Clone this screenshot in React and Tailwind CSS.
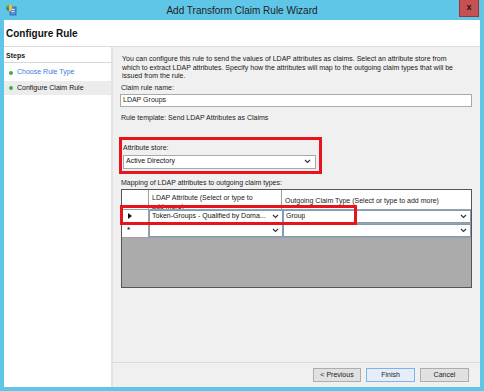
import React from 'react';

const font = { fontFamily: '"Liberation Sans", Arial, sans-serif' };

const Chevron = () => (
  <svg width="7" height="5" viewBox="0 0 7 5" className="shrink-0">
    <path d="M1 1 L3.5 3.5 L6 1" fill="none" stroke="#333" strokeWidth="1.1" />
  </svg>
);

const TitleIcon = () => (
  <svg width="12" height="12" viewBox="0 0 12 12">
    <rect x="5" y="3" width="6" height="8" fill="#5b8fd6" stroke="#2f5ea8" strokeWidth="0.8" />
    <rect x="6.5" y="5" width="3" height="1" fill="#cfe3ff" />
    <rect x="6.5" y="7" width="3" height="1" fill="#cfe3ff" />
    <circle cx="4" cy="4" r="3.2" fill="#f2c12e" />
    <path d="M1 4 A3 3 0 0 1 4 1 L4 4 Z" fill="#3fae49" />
    <path d="M4 7 A3 3 0 0 1 1 4 L4 4 Z" fill="#2b7fd1" />
  </svg>
);

const Combo = ({ text, className }) => (
  <div className={`flex items-center justify-between bg-white border border-[#7f9db9] pl-[2px] pr-[3px] ${className}`}>
    <span className="truncate text-[7px] text-[#111]">{text}</span>
    <Chevron />
  </div>
);

export default function App() {
  return (
    <div style={font} className="w-[484px] h-[391px] bg-[#5fc6e8] flex flex-col text-[#1a1a1a]">
      {/* title bar */}
      <div className="h-[20px] flex items-center relative pl-[5px]">
        <TitleIcon />
        <div className="absolute left-0 right-0 top-0 h-[20px] flex items-center justify-center text-[10px] text-[#222] pointer-events-none">
          Add Transform Claim Rule Wizard
        </div>
        <div className="absolute right-[5px] top-0 w-[20px] h-[17px] bg-[#c75050] border border-[#8f3a37] border-t-0 flex items-center justify-center text-[9px] font-bold text-[#1a1a1a]">
          x
        </div>
      </div>

      {/* body */}
      <div className="flex-1 mx-[4px] mb-[4px] bg-white flex flex-col">
        <div className="h-[27px] flex items-center pl-[2px] border-b border-[#dcdcdc]">
          <span className="text-[10px] font-bold text-[#111]">Configure Rule</span>
        </div>

        <div className="flex-1 flex">
          {/* steps */}
          <div className="w-[109px] border-r-2 border-[#e3e3e3] flex flex-col">
            <div className="h-[13px] flex items-center pl-[2px] border-b border-[#d8d8d8] mt-[3px]">
              <span className="text-[7px] font-bold">Steps</span>
            </div>
            <div className="h-[17px] flex items-center pl-[5px] gap-[4px] mt-[1px]">
              <span className="w-[4px] h-[4px] rounded-full bg-[#3cb43c]" />
              <span className="text-[7px] text-[#3f78e0]">Choose Rule Type</span>
            </div>
            <div className="h-[14px] flex items-center pl-[5px] gap-[4px] bg-[#ececec]">
              <span className="w-[4px] h-[4px] rounded-full bg-[#3cb43c]" />
              <span className="text-[7px] text-[#111]">Configure Claim Rule</span>
            </div>
          </div>

          {/* main */}
          <div className="flex-1 bg-[#f0f0f0] flex flex-col">
            <div className="flex-1 pl-[7px] pr-[8px] pt-[8px] text-[7px] text-[#1a1a1a]">
              <p className="leading-[8.5px] pl-[2px] pr-[10px]">
                You can configure this rule to send the values of LDAP attributes as claims. Select an attribute store from which to extract LDAP attributes. Specify how the attributes will map to the outgoing claim types that will be issued from the rule.
              </p>
              <div className="leading-[9px] mt-[2px] pl-[1px]">Claim rule name:</div>
              <div className="mt-[2px] h-[13px] bg-white border border-[#a9a9a9] flex items-center pl-[2px]">
                LDAP Groups
              </div>
              <div className="leading-[9px] mt-[6px] pl-[1px]">Rule template: Send LDAP Attributes as Claims</div>

              <div className="mt-[15px] -ml-[1px] w-[203px] border-[3px] border-[#e8141c] pl-[1px] pr-[3px] pt-[3px] pb-[2px]">
                <div className="leading-[9px]">Attribute store:</div>
                <Combo text="Active Directory" className="mt-[3px] h-[14px] border-[#a9a9a9] pr-[4px]" />
              </div>

              <div className="leading-[9px] mt-[4px] pl-[1px]">Mapping of LDAP attributes to outgoing claim types:</div>

              <div className="relative mt-[2px] ml-[1px] h-[99px] bg-[#ababab] border border-[#555]">
                <div className="flex h-[20px] bg-white border-b border-[#a0a0a0]">
                  <div className="w-[27px] border-r border-[#a0a0a0]" />
                  <div className="w-[133px] border-r border-[#a0a0a0] pl-[3px] pr-[22px] pt-[3px] leading-[9px] overflow-hidden">
                    LDAP Attribute (Select or type to add more)
                  </div>
                  <div className="flex-1 pl-[3px] flex items-center pt-[4px]">
                    Outgoing Claim Type (Select or type to add more)
                  </div>
                </div>
                <div className="flex h-[14px] border-b border-[#a0a0a0]">
                  <div className="w-[27px] bg-white border-r border-[#a0a0a0] flex items-center pl-[6px]">
                    <svg width="4" height="6" viewBox="0 0 4 6"><path d="M0 0 L4 3 L0 6 Z" fill="#111" /></svg>
                  </div>
                  <Combo text="Token-Groups - Qualified by Doma..." className="w-[134px] h-full" />
                  <Combo text="Group" className="flex-1 h-full" />
                </div>
                <div className="flex h-[14px] w-full border-b border-[#a0a0a0]">
                  <div className="w-[27px] bg-white border-r border-[#a0a0a0] flex items-center pl-[5px] text-[8px] leading-none font-bold">
                    *
                  </div>
                  <Combo text="" className="w-[134px] h-full" />
                  <Combo text="" className="flex-1 h-full" />
                </div>
                <div className="absolute left-[-2px] top-[15px] w-[237px] h-[20px] border-[3px] border-[#e8141c] pointer-events-none" />
              </div>
            </div>

            <div className="h-[25px] border-t border-[#dadada] flex items-center justify-end gap-[5px] pr-[11px]">
              <button className="w-[48px] h-[14px] bg-[#e1e1e1] border border-[#adadad] text-[7px]">&lt; Previous</button>
              <button className="w-[49px] h-[14px] bg-[#e5eef8] border border-[#7eb4ea] text-[7px]">Finish</button>
              <button className="w-[49px] h-[14px] bg-[#e1e1e1] border border-[#adadad] text-[7px]">Cancel</button>
            </div>
          </div>
        </div>
      </div>
    </div>
  );
}
